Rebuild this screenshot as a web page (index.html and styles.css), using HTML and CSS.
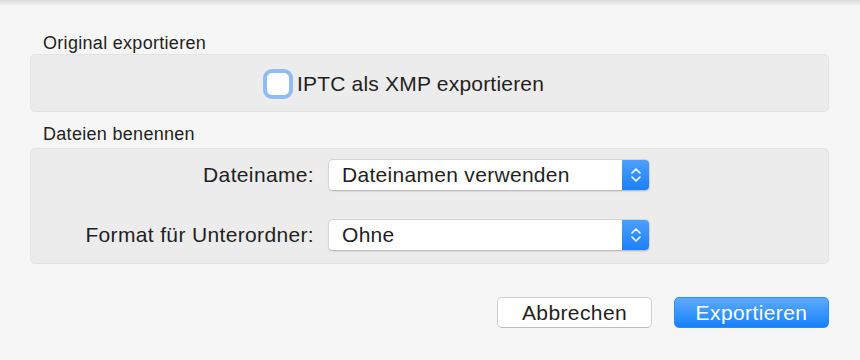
FILE: index.html
```html
<!DOCTYPE html>
<html lang="de">
<head>
    <meta charset="UTF-8">
    <title>Exportieren</title>
    <link rel="stylesheet" href="styles.css">
</head>
<body>
    <div class="top-edge"></div>
    <div class="dialog">
        <div class="group-title">Original exportieren</div>
        <div class="group-box box-check">
            <label class="check-row">
                <span class="checkbox"></span>
                <span>IPTC als XMP exportieren</span>
            </label>
        </div>

        <div class="group-title">Dateien benennen</div>
        <div class="group-box box-form">
            <div class="form-row">
                <span class="row-label">Dateiname:</span>
                <div class="popup">
                    <span class="popup-text">Dateinamen verwenden</span>
                    <span class="popup-arrows">
                        <svg width="12" height="20" viewBox="0 0 12 20"><path d="M2 8 L6 4 L10 8 M2 12 L6 16 L10 12" fill="none" stroke="#fff" stroke-width="1.6" stroke-linecap="round" stroke-linejoin="round"/></svg>
                    </span>
                </div>
            </div>
            <div class="form-row">
                <span class="row-label">Format für Unterordner:</span>
                <div class="popup">
                    <span class="popup-text">Ohne</span>
                    <span class="popup-arrows">
                        <svg width="12" height="20" viewBox="0 0 12 20"><path d="M2 8 L6 4 L10 8 M2 12 L6 16 L10 12" fill="none" stroke="#fff" stroke-width="1.6" stroke-linecap="round" stroke-linejoin="round"/></svg>
                    </span>
                </div>
            </div>
        </div>

        <div class="buttons">
            <button class="btn">Abbrechen</button>
            <button class="btn btn-primary">Exportieren</button>
        </div>
    </div>
</body>
</html>
```

FILE: styles.css
```css
body {
    margin: 0;
    background: #f6f6f6;
    font-family: "Liberation Sans", Arial, sans-serif;
    color: #1f1f1f;
    letter-spacing: 0.35px;
}
.top-edge {
    height: 5px;
    background: linear-gradient(#d9d9d9, #f1f1f1);
}
.dialog {
    padding: 0 31px 0 30px;
}
.group-title {
    font-size: 18px;
    line-height: 20px;
    padding-left: 13px;
    margin-top: 28px;
    margin-bottom: 1px;
    letter-spacing: 0.3px;
}
.group-box + .group-title {
    margin-top: 12px;
    margin-bottom: 4px;
}
.group-box {
    background: #ececec;
    border: 1px solid #e3e3e3;
    border-radius: 5px;
}
.box-check {
    height: 56px;
    display: flex;
    justify-content: center;
    align-items: center;
}
.check-row {
    display: flex;
    align-items: center;
    gap: 8px;
    font-size: 21px;
    letter-spacing: 0.2px;
    margin-right: 48px;
    margin-top: 2px;
}
.checkbox {
    width: 22px;
    height: 22px;
    background: #fff;
    border-radius: 5px;
    box-shadow: 0 0 0 4px #8fbcf3;
}
.box-form {
    padding: 10px 0 12px 0;
    display: flex;
    flex-direction: column;
    gap: 28px;
}
.form-row {
    display: grid;
    grid-template-columns: 283px 322px;
    column-gap: 14px;
    align-items: center;
    font-size: 21px;
}
.row-label {
    text-align: right;
}
.popup {
    height: 30px;
    display: flex;
    background: #fff;
    border: 1px solid #d3d3d3;
    border-bottom-color: #bdbdbd;
    border-radius: 5px;
    overflow: hidden;
    box-shadow: 0 1px 1px rgba(0, 0, 0, 0.08);
}
.popup-text {
    flex: 1;
    padding-left: 13px;
    line-height: 30px;
    letter-spacing: 0.3px;
}
.popup-arrows {
    width: 27px;
    display: flex;
    align-items: center;
    justify-content: center;
    background: linear-gradient(#4ca0ff, #1b80fa);
}
.buttons {
    display: flex;
    justify-content: flex-end;
    gap: 22px;
    margin-top: 33px;
}
.btn {
    width: 155px;
    height: 31px;
    font-family: "Liberation Sans", Arial, sans-serif;
    font-size: 21px;
    letter-spacing: 0.4px;
    color: #1f1f1f;
    background: #fff;
    border: 1px solid #d0d0d0;
    border-bottom-color: #bcbcbc;
    border-radius: 5px;
}
.btn-primary {
    color: #fff;
    background: linear-gradient(#5eabff, #1681fb);
    border-color: #2a8cfb;
}
```
